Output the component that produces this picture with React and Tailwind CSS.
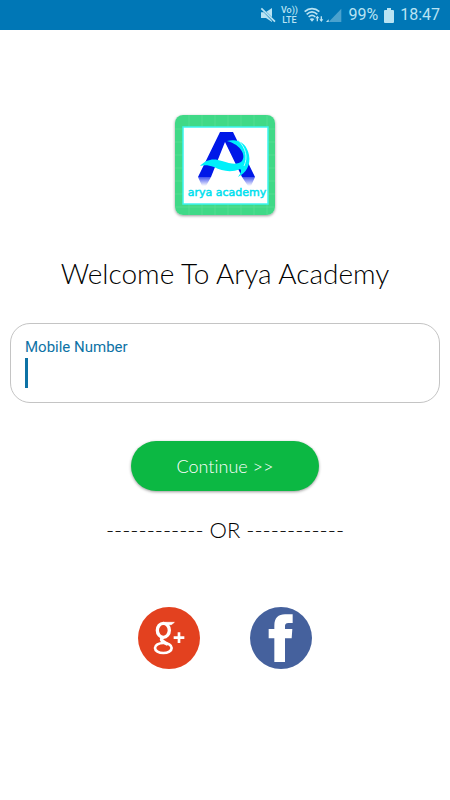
import React, { useState } from "react";

const StatusBar = () => (
  <header className="flex h-[30px] items-center justify-end bg-[#0077b6] pr-[10px] font-['Roboto',sans-serif] text-[#b9e3f3]">
    {/* Muted speaker */}
    <svg viewBox="0 0 48 48" className="mr-1 h-4 w-4" fill="currentColor">
      <path d="M3 16h8l25 26v3L18 33H3z" />
      <path d="M19 14L36 3v28z" />
      <path d="M4 4l41 40" stroke="currentColor" strokeWidth="5" />
    </svg>
    <div className="mr-1.5 flex w-[18px] flex-col items-center text-[9px] leading-[10px] font-medium">
      <span>Vo))</span>
      <span>LTE</span>
    </div>
    {/* Wi-Fi with transfer arrows */}
    <svg viewBox="0 0 60 48" className="mr-0.5 h-4 w-5" fill="none" stroke="currentColor" strokeWidth="5">
      <path d="M2 14c13-12 31-12 44 0M8 22c10-9 22-9 32 0M14 30c6-6 14-6 20 0" />
      <path d="M24 44l-7-8c4-3 10-3 14 0z" fill="currentColor" stroke="none" />
      <path d="M40 43V30M52 28v13" strokeWidth="4" />
      <path d="M34 34l6-8 6 8zM46 37l6 8 6-8z" fill="currentColor" stroke="none" />
    </svg>
    <svg viewBox="0 0 48 48" className="mr-1.5 h-4 w-4" fill="currentColor">
      <path d="M8 45L46 5v40z" opacity="0.4" />
      <path d="M0 45l8-8v8z" />
    </svg>
    <span className="mr-1.5 text-base">99%</span>
    <svg viewBox="0 0 10 15" className="mr-1.5 h-[15px] w-[10px]" fill="currentColor">
      <path d="M3 0h4v2h2q1 0 1 1v11q0 1-1 1H1q-1 0-1-1V3q0-1 1-1h2z" />
    </svg>
    <span className="text-base">18:47</span>
  </header>
);

const Logo = () => (
  <svg viewBox="0 0 100 100" className="h-[100px] w-[100px] rounded-lg shadow-[0_1px_3px_rgba(0,0,0,0.4)]" role="img" aria-label="Arya Academy">
    <defs>
      <linearGradient id="reflection" x1="0" y1="0" x2="0" y2="1">
        <stop offset="0" stopColor="#0018e8" stopOpacity="0.75" />
        <stop offset="1" stopColor="#0018e8" stopOpacity="0" />
      </linearGradient>
    </defs>
    <rect width="100" height="100" fill="#40d987" />
    <path
      d="M14 0v100M27 0v100M40 0v100M53 0v100M66 0v100M79 0v100M92 0v100M0 14h100M0 27h100M0 40h100M0 53h100M0 66h100M0 79h100M0 92h100"
      stroke="#5fe09b"
      strokeWidth="0.6"
    />
    <rect x="8" y="12" width="85" height="77" fill="#fff" stroke="#3df5f0" strokeWidth="1.5" />
    <path d="M23 62h13l-5 9H27zM67 62h13l-4 9H73z" fill="url(#reflection)" />
    <path d="M45 17h13l22 45H67L50 27 36 62H23z" fill="#0018e8" />
    <path
      d="M25 51c6-7 14-8 22-5 9 3 16 4 20 0 4-5 0-16-15-20 12-3 20 3 22 14 2 10-3 18-11 22 3-4 4-7 2-8-9 4-18 2-26-2-6-2-10-2-14-1z"
      fill="#00f0fa"
    />
    <path d="M63 25c8 8 10 17 6 26" fill="none" stroke="#baffff" strokeWidth="1" />
    <text x="52" y="81" textAnchor="middle" className="font-['DejaVu_Sans',sans-serif] text-[11px]" fill="#00e0ee" stroke="#00e0ee" strokeWidth="0.5">
      arya academy
    </text>
  </svg>
);

const App = () => {
  const [mobile, setMobile] = useState("");

  return (
    <div className="min-h-screen bg-white font-['Lato',sans-serif] text-black">
      <StatusBar />

      <main className="flex flex-col items-center px-[10px] pt-[85px]">
        <Logo />

        <h1 className="mt-[42px] text-[28px] leading-8 font-light">Welcome To Arya Academy</h1>

        {/* Mobile number field */}
        <div className="mt-[34px] h-20 w-full rounded-[20px] border border-[#c4c4c4] px-3.5 pt-3 font-['Roboto',sans-serif]">
          <label htmlFor="mobile" className="block text-[15px] leading-[22px] text-[#0d72a5]">
            Mobile Number
          </label>
          <div className="flex h-[30px] items-center">
            <span className="h-[30px] w-[3px] bg-[#0d72a5]" />
            <input
              id="mobile"
              type="tel"
              value={mobile}
              onChange={(e) => setMobile(e.target.value)}
              className="min-w-0 flex-1 bg-transparent px-1 text-lg caret-transparent outline-none"
            />
          </div>
        </div>

        <button
          type="button"
          className="mt-[38px] h-[50px] w-[188px] rounded-full bg-[#0cb843] text-lg font-light text-white shadow-[0_1px_3px_rgba(0,0,0,0.4)] [font-variant-ligatures:none]"
        >
          Continue &gt;&gt;
        </button>

        <p className="mt-6 text-[22px] leading-[30px] font-light">------------ OR ------------</p>

        {/* Social sign in */}
        <div className="mt-[62px] flex gap-[50px]">
          <button type="button" aria-label="Sign in with Google+">
            <svg viewBox="38 35 186 186" className="h-[62px] w-[62px]">
              <circle cx="131" cy="128" r="93" fill="#e3411f" />
              <g fill="none" stroke="#fff">
                <ellipse cx="114" cy="105" rx="18" ry="21" strokeWidth="10" />
                <path d="M113 81h34l-9 7h-16" fill="#fff" strokeWidth="2" />
                <path d="M112 126c-10 10 4 14 16 21" strokeWidth="10" />
                <ellipse cx="114" cy="158" rx="25" ry="15" strokeWidth="8" />
                <path d="M145 127h32M161 111v32" strokeWidth="8" />
              </g>
            </svg>
          </button>
          <button type="button" aria-label="Sign in with Facebook">
            <svg viewBox="376 35 186 186" className="h-[62px] w-[62px]">
              <circle cx="469" cy="128" r="93" fill="#45619d" />
              <path d="M449 200v-71h-17v-28h17V91c0-24 12-34 32-34h23v26h-13c-8 0-10 4-10 10v8h22l-2 28h-20v71z" fill="#fff" />
            </svg>
          </button>
        </div>
      </main>
    </div>
  );
};

export default App;
